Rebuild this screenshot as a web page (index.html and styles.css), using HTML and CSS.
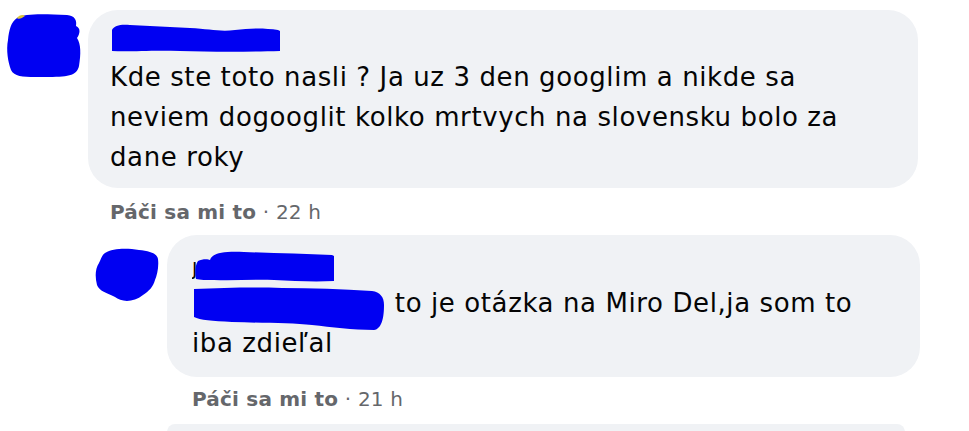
FILE: index.html
```html
<!DOCTYPE html>
<html lang="sk">
<head>
<meta charset="utf-8">
<link rel="stylesheet" href="styles.css">
</head>
<body>
<div class="thread">
  <div class="comment">
    <div class="avatar avatar-main">
      <svg width="80" height="72" viewBox="0 0 80 72">
        <path d="M12 8 C20 3 40 4 62 5 C70 6 72 10 71 16 C76 18 75 24 72 28 C76 34 76 44 74 56 C72 66 62 67 40 67 C22 67 10 68 6 60 C3 52 1 40 3 30 C4 20 6 12 12 8 Z" fill="#0000f2"/>
        <path d="M12 8 C14 5 18 4 20 6 C17 8 14 10 12 8 Z" fill="#d8c23a"/>
      </svg>
    </div>
    <div class="body">
      <div class="bubble bubble-main">
        <div class="name">
          <svg width="175" height="32" viewBox="0 0 175 32">
            <path d="M2 8 C4 3 12 2 20 3 C40 4 60 5 80 6 C100 7 110 10 125 8 C140 6 155 6 168 8 L170 9 L170 29 C140 30 100 30 70 29 C40 28 20 30 2 29 Z" fill="#0000f2"/>
          </svg>
        </div>
        <p class="text">Kde ste toto nasli ? Ja uz 3 den googlim a nikde sa<br>neviem dogooglit kolko mrtvych na slovensku bolo za<br>dane roky</p>
      </div>
      <div class="meta"><span class="like">Páči sa mi to</span> · 22 h</div>
    </div>
  </div>

  <div class="comment reply">
    <div class="avatar avatar-reply">
      <svg width="70" height="58" viewBox="0 0 70 58">
        <path d="M12 6 C20 1 34 1 46 3 C56 4 64 6 65 12 C66 20 64 28 62 33 C60 40 56 44 50 48 C40 56 28 55 22 50 C14 46 6 44 4 38 C2 30 2 22 6 16 C8 12 9 8 12 6 Z" fill="#0000f2"/>
      </svg>
    </div>
    <div class="body">
      <div class="bubble bubble-reply">
        <div class="name name-reply">
          <span class="letter">J</span>
          <svg class="name-blob" width="145" height="34" viewBox="0 0 145 34">
            <path d="M4 12 C8 10 14 10 16 11 C18 4 30 2 50 3 C80 4 110 5 138 6 L140 7 L140 32 C120 33 100 32 80 31 C60 30 40 32 20 31 C12 31 6 31 2 30 C1 24 1 16 4 12 Z" fill="#0000f2"/>
          </svg>
        </div>
        <p class="text"><span class="redact"><svg width="194" height="48" viewBox="0 0 194 48"><path d="M2 6 C30 5 60 4 90 5 C120 5 150 6 180 8 C188 9 192 14 192 22 C192 34 190 46 182 47 C160 47 140 44 120 42 C100 40 70 40 40 39 C20 38 8 37 2 34 Z" fill="#0000f2"/></svg></span> to je otázka na Miro Del,ja som to<br>iba zdieľal</p>
      </div>
      <div class="meta"><span class="like">Páči sa mi to</span> · 21 h</div>
      <div class="bubble bubble-next"></div>
    </div>
  </div>
</div>
</body>
</html>
```

FILE: styles.css
```css
html, body {
  margin: 0;
  padding: 0;
  background: #ffffff;
}

body {
  width: 969px;
  height: 431px;
  overflow: hidden;
  font-family: "DejaVu Sans", "Open Sans", sans-serif;
  color: #050505;
}

.thread {
  display: flex;
  flex-direction: column;
}

.comment {
  display: flex;
  align-items: flex-start;
}

.avatar {
  flex: none;
}

.avatar svg {
  display: block;
}

.avatar-main {
  width: 80px;
  margin-left: 5px;
  margin-top: 10px;
  margin-right: 3px;
}

.body {
  display: flex;
  flex-direction: column;
}

.bubble {
  background: #f0f2f5;
  border-radius: 30px;
}

.bubble-main {
  width: 808px;
  margin-top: 10px;
  padding: 12px 0 11px 22px;
}

.name {
  height: 35px;
}

.name svg {
  display: block;
}

.text {
  margin: 0;
  font-size: 26px;
  line-height: 40px;
  letter-spacing: 0.6px;
  white-space: nowrap;
}

.meta {
  margin-top: 12px;
  margin-left: 22px;
  font-size: 20px;
  line-height: 24px;
  color: #65676b;
  letter-spacing: 0.2px;
}

.like {
  font-weight: 700;
}

.reply {
  margin-top: 11px;
}

.avatar-reply {
  width: 70px;
  margin-left: 93px;
  margin-top: 12px;
  margin-right: 4px;
}

.bubble-reply {
  width: 728px;
  padding: 17px 0 14px 25px;
}

.name-reply {
  height: 31px;
  display: flex;
  align-items: flex-end;
}

.letter {
  font-size: 18px;
  line-height: 24px;
  width: 4px;
  overflow: hidden;
  color: #050505;
  margin-bottom: 2px;
}

.name-blob {
  margin-left: -2px;
}

.redact {
  display: inline-block;
  width: 194px;
  height: 40px;
  vertical-align: top;
  letter-spacing: 0;
}

.redact svg {
  display: block;
  overflow: visible;
}

.reply .meta {
  margin-left: 25px;
  margin-top: 10px;
}

.bubble-next {
  width: 738px;
  height: 8px;
  margin-top: 13px;
  border-radius: 30px 30px 0 0;
}
```
